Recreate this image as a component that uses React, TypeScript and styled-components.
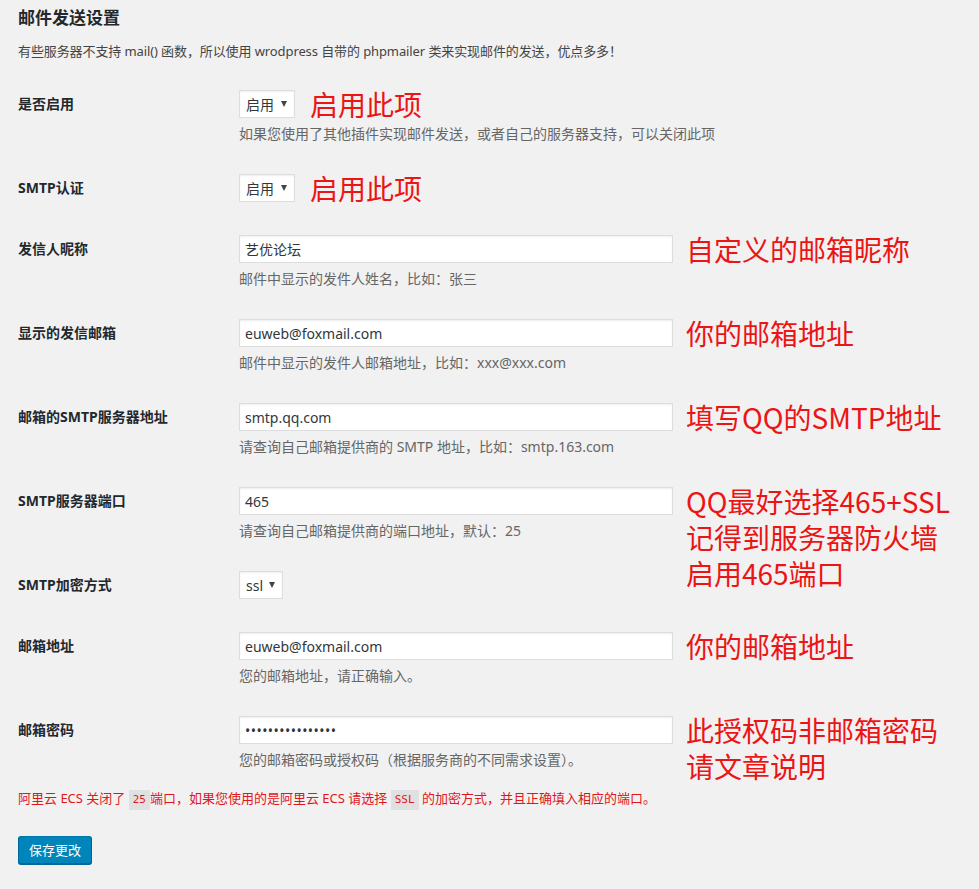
import React from "react";
import styled, { createGlobalStyle } from "styled-components";

type Row = {
  label: string;
  kind: "select" | "text" | "password";
  value: string;
  width?: number;
  desc?: string;
  note?: string;
};

const rows: Row[] = [
  {
    label: "是否启用",
    kind: "select",
    value: "启用",
    width: 56,
    desc: "如果您使用了其他插件实现邮件发送，或者自己的服务器支持，可以关闭此项",
    note: "启用此项",
  },
  { label: "SMTP认证", kind: "select", value: "启用", width: 56, note: "启用此项" },
  {
    label: "发信人昵称",
    kind: "text",
    value: "艺优论坛",
    desc: "邮件中显示的发件人姓名，比如：张三",
    note: "自定义的邮箱昵称",
  },
  {
    label: "显示的发信邮箱",
    kind: "text",
    value: "euweb@foxmail.com",
    desc: "邮件中显示的发件人邮箱地址，比如：xxx@xxx.com",
    note: "你的邮箱地址",
  },
  {
    label: "邮箱的SMTP服务器地址",
    kind: "text",
    value: "smtp.qq.com",
    desc: "请查询自己邮箱提供商的 SMTP 地址，比如：smtp.163.com",
    note: "填写QQ的SMTP地址",
  },
  {
    label: "SMTP服务器端口",
    kind: "text",
    value: "465",
    desc: "请查询自己邮箱提供商的端口地址，默认：25",
    note: "QQ最好选择465+SSL\n记得到服务器防火墙\n启用465端口",
  },
  { label: "SMTP加密方式", kind: "select", value: "ssl", width: 44 },
  {
    label: "邮箱地址",
    kind: "text",
    value: "euweb@foxmail.com",
    desc: "您的邮箱地址，请正确输入。",
    note: "你的邮箱地址",
  },
  {
    label: "邮箱密码",
    kind: "password",
    value: "1234567890abcdef",
    desc: "您的邮箱密码或授权码（根据服务商的不同需求设置）。",
    note: "此授权码非邮箱密码\n请文章说明",
  },
];

const App = () => {
  return (
    <>
      <GlobalStyle />
      <Page>
        <Title>邮件发送设置</Title>
        <Intro>
          有些服务器不支持 mail() 函数，所以使用 wrodpress 自带的 phpmailer
          类来实现邮件的发送，优点多多！
        </Intro>
        <FormTable>
          {rows.map((row) => (
            <TableRow key={row.label}>
              <Th>{row.label}</Th>
              <Td>
                <FieldLine>
                  {row.kind === "select" ? (
                    <SelectBox $width={row.width ?? 56}>
                      <span>{row.value}</span>
                      <Arrow />
                    </SelectBox>
                  ) : (
                    <TextInput
                      type={row.kind === "password" ? "password" : "text"}
                      $secret={row.kind === "password"}
                      defaultValue={row.value}
                    />
                  )}
                  {row.note ? (
                    <Annotation $select={row.kind === "select"}>
                      {row.note}
                    </Annotation>
                  ) : null}
                </FieldLine>
                {row.desc ? <Description>{row.desc}</Description> : null}
              </Td>
            </TableRow>
          ))}
        </FormTable>
        <Warning>
          阿里云 ECS 关闭了 <Code>25</Code>端口，如果您使用的是阿里云 ECS 请选择{" "}
          <Code>SSL</Code> 的加密方式，并且正确填入相应的端口。
        </Warning>
        <SaveButton>保存更改</SaveButton>
      </Page>
    </>
  );
};

const GlobalStyle = createGlobalStyle`
  html, body {
    margin: 0;
    background: #f1f1f1;
  }
  body {
    font-family: "Noto Sans", "Noto Sans CJK SC", sans-serif;
    color: #444;
  }
`;
const Page = styled.div`
  padding: 6px 18px 20px;
  min-height: 860px;
`;
const Title = styled.h2`
  margin: 0;
  font-size: 17px;
  line-height: 24px;
  font-weight: 700;
  color: #23282d;
`;
const Intro = styled.p`
  margin: 10px 0 13px;
  font-size: 13px;
  line-height: 22px;
  color: #444;
  letter-spacing: -0.1px;
`;
const FormTable = styled.div`
  display: flex;
  flex-direction: column;
`;
const TableRow = styled.div`
  display: flex;
  align-items: flex-start;
`;
const Th = styled.div`
  width: 221px;
  flex-shrink: 0;
  padding: 19px 0 22px;
  font-size: 14px;
  line-height: 20px;
  font-weight: 700;
  color: #23282d;
`;
const Td = styled.div`
  flex: 1;
  padding: 15px 0 14px;
`;
const FieldLine = styled.div`
  display: flex;
  align-items: flex-start;
  height: 28px;
`;
const SelectBox = styled.div<{ $width: number }>`
  box-sizing: border-box;
  width: ${(p) => p.$width}px;
  height: 28px;
  display: flex;
  align-items: center;
  justify-content: space-between;
  padding: 0 7px 0 6px;
  background: #fff;
  border: 1px solid #ddd;
  box-shadow: inset 0 1px 2px rgba(0, 0, 0, 0.07);
  font-size: 14px;
  color: #32373c;
  flex-shrink: 0;
`;
const Arrow = styled.span`
  width: 0;
  height: 0;
  border-left: 3px solid transparent;
  border-right: 3px solid transparent;
  border-top: 6px solid #444;
`;
const TextInput = styled.input<{ $secret: boolean }>`
  box-sizing: border-box;
  width: 434px;
  height: 28px;
  margin: 0;
  padding: 0 5px;
  flex-shrink: 0;
  background: #fff;
  border: 1px solid #ddd;
  border-radius: 0;
  box-shadow: inset 0 1px 2px rgba(0, 0, 0, 0.07);
  font-family: "Noto Sans", "Noto Sans CJK SC", sans-serif;
  font-size: 14px;
  letter-spacing: ${(p) => (p.$secret ? "0.45px" : "0")};
  color: #32373c;
  outline: none;
`;
const Annotation = styled.div<{ $select: boolean }>`
  margin: -4px 0 0 ${(p) => (p.$select ? 15 : 13)}px;
  height: 28px;
  white-space: pre-line;
  font-family: "Noto Sans CJK SC", sans-serif;
  font-size: 28px;
  line-height: 36px;
  color: #ec1515;
`;
const Description = styled.p`
  margin: 5px 0 0;
  font-size: 14px;
  line-height: 22px;
  color: #666;
`;
const Warning = styled.p`
  margin: 2px 0 0;
  font-size: 13px;
  line-height: 22px;
  color: #e0161b;
`;
const Code = styled.code`
  display: inline-block;
  padding: 0 4px;
  line-height: 20px;
  background: rgba(0, 0, 0, 0.07);
  font-family: "DejaVu Sans Mono", monospace;
  font-size: 11px;
`;
const SaveButton = styled.button`
  display: block;
  margin-top: 26px;
  height: 28px;
  padding: 0 10px;
  background: #0085ba;
  border: 1px solid #0073aa;
  border-color: #0073aa #006799 #006799;
  border-radius: 3px;
  box-shadow: 0 1px 0 #006799;
  color: #fff;
  font-family: "Noto Sans", "Noto Sans CJK SC", sans-serif;
  font-size: 13px;
  line-height: 26px;
  cursor: pointer;
`;

export default App;
